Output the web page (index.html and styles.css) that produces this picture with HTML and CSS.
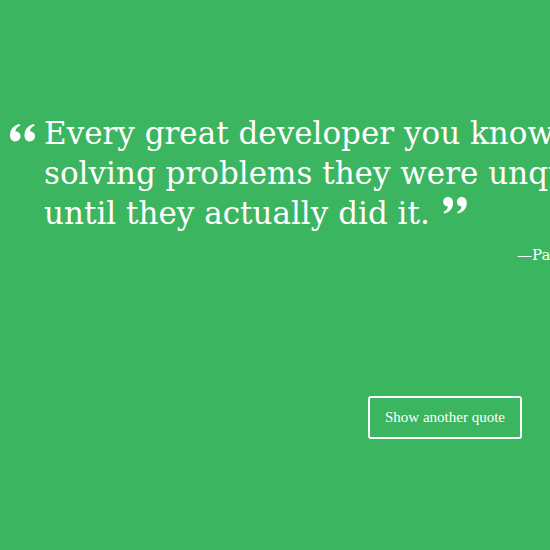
FILE: index.html
```html
<!DOCTYPE html>
<html>
<head>
<meta charset="utf-8">
<link rel="stylesheet" href="styles.css">
</head>
<body>
<main class="machine">
  <blockquote class="quote">
    <svg class="mark open" viewBox="0 0 26 18" width="26" height="18"><path d="M0 11.5C0 5 4 1.2 9.5 0l.7 1.6C7.2 3 5.6 5.2 5.5 7.4c2.9 0 5 2 5 4.7 0 3.2-2.3 5.4-5.2 5.4C2.2 17.5 0 15 0 11.5zM14.5 11.5c0-6.5 4-10.3 9.5-11.5l.7 1.6c-3 1.4-4.6 3.6-4.7 5.8 2.9 0 5 2 5 4.7 0 3.2-2.300 5.4-5.2 5.4-3.1 0-5.300-2.5-5.300-6z" fill="#fff"/></svg>
    <p class="text">
      <span class="line">Every great developer you know got there by</span>
      <span class="line">solving problems they were unqualified to solve</span>
      <span class="line">until they actually did it.<svg class="mark close" viewBox="0 0 26 18" width="25" height="17"><path d="M26 6C26 12.5 22 16.3 16.5 17.5l-.7-1.6c3-1.4 4.6-3.6 4.7-5.8-2.9 0-5-2-5-4.7C15.5 2.2 17.8 0 20.7 0 23.8 0 26 2.5 26 6zM11.5 6c0 6.5-4 10.3-9.5 11.5l-.7-1.6C4.300 14.5 5.9 12.3 6 10.1 3.1 10.1 1 8.1 1 5.4 1 2.2 3.3 0 6.2 0c3.1 0 5.3 2.5 5.3 6z" fill="#fff"/></svg></span>
    </p>
  </blockquote>
  <p class="author">—Paul Graham</p>
  <div class="actions">
    <button class="btn" type="button">Show another quote</button>
  </div>
</main>
</body>
</html>
```
FILE: styles.css
```css
html, body {
  margin: 0;
  padding: 0;
}
body {
  width: 550px;
  height: 550px;
  overflow: hidden;
  background: #3bb55f;
  color: #fff;
  font-family: "DejaVu Serif", "Liberation Serif", serif;
}
.machine {
  padding-top: 113px;
  width: 900px;
}
.quote {
  margin: 0;
  padding-left: 10px;
  display: flex;
  align-items: flex-start;
  gap: 8px;
}
.mark.open {
  margin-top: 11px;
  flex: none;
}
.text {
  margin: 0;
  font-size: 31px;
  line-height: 40px;
  white-space: nowrap;
}
.line {
  display: block;
}
.mark.close {
  margin-left: 12px;
  vertical-align: 10px;
}
.author {
  margin: 13px 0 0 517px;
  font-size: 15px;
  white-space: nowrap;
}
.actions {
  width: 522px;
  display: flex;
  justify-content: flex-end;
  margin-top: 132px;
}
.btn {
  font-family: "Liberation Serif", "DejaVu Serif", serif;
  font-size: 15px;
  color: #fff;
  background: transparent;
  border: 2px solid #fff;
  border-radius: 3px;
  width: 154px;
  height: 43px;
  padding: 0;
}
```
